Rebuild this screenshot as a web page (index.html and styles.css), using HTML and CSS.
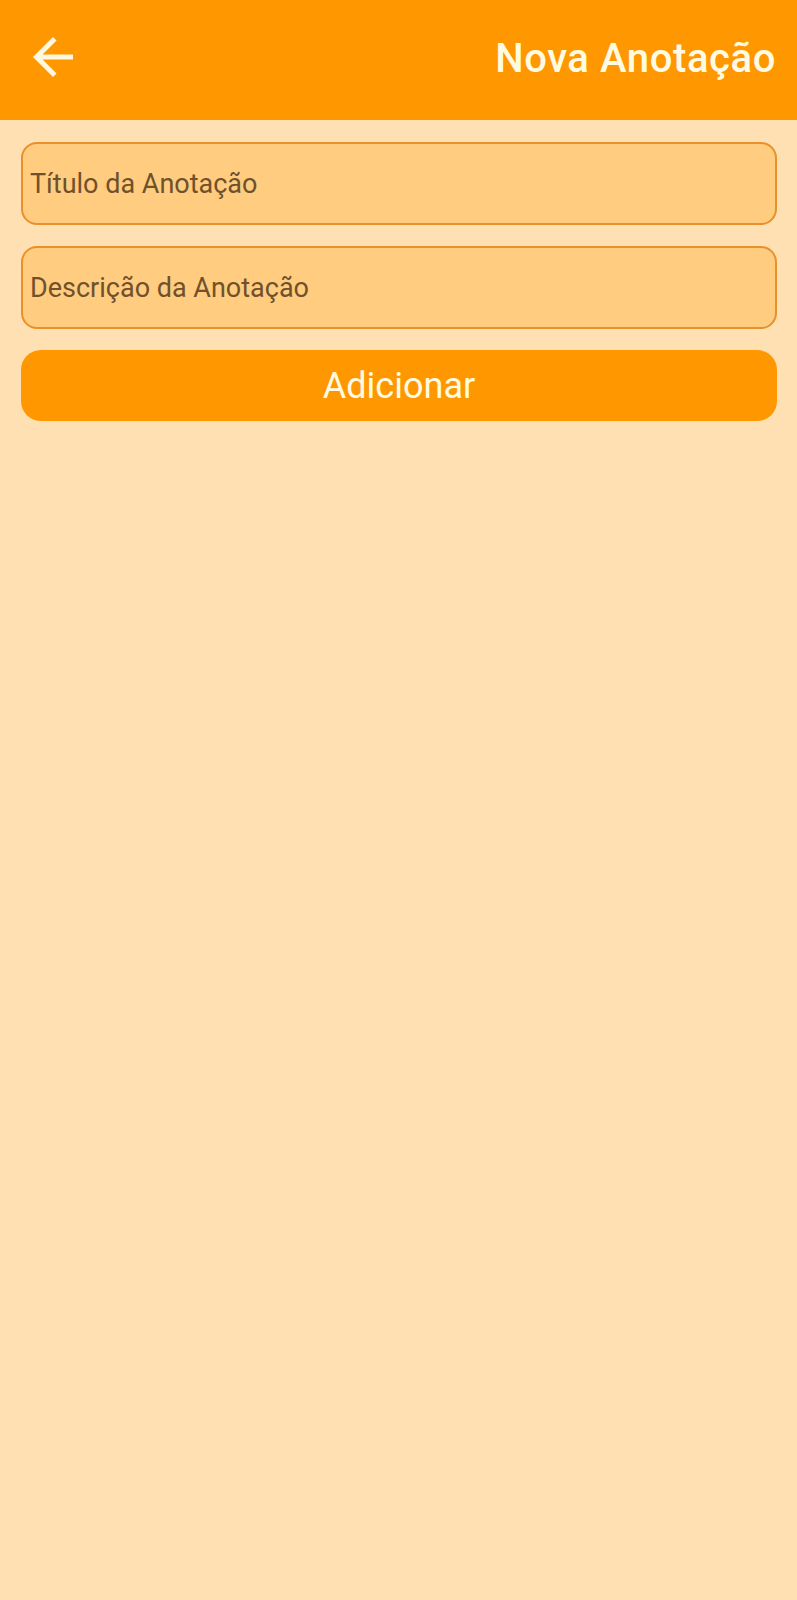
FILE: index.html
```html
<!DOCTYPE html>
<html lang="pt">
<head>
<meta charset="utf-8">
<title>Nova Anotação</title>
<link rel="stylesheet" href="styles.css">
</head>
<body>
<header class="appbar">
  <button class="back" aria-label="Voltar">
    <svg viewBox="0 0 24 24" width="60" height="60"><path d="M20 11H7.83l5.59-5.59L12 4l-8 8 8 8 1.41-1.41L7.83 13H20v-2z" fill="#fff8e1"/></svg>
  </button>
  <h1 class="title">Nova Anotação</h1>
</header>
<main class="content">
  <div class="field">Título da Anotação</div>
  <div class="field">Descrição da Anotação</div>
  <button class="add">Adicionar</button>
</main>
</body>
</html>
```
FILE: styles.css
```css
* { box-sizing: border-box; }
html, body { margin: 0; padding: 0; }
body {
  background: #ffe0b2;
  font-family: Roboto, "Noto Sans", sans-serif;
  min-height: 1600px;
}
.appbar {
  height: 120px;
  background: #ff9800;
  display: flex;
  align-items: center;
  justify-content: space-between;
  padding: 0 21px 0 23px;
}
.back {
  border: 0;
  background: none;
  padding: 0;
  width: 60px;
  height: 60px;
  display: flex;
  margin-top: -6px;
}
.title {
  margin: 0;
  color: #fffbe3;
  font-size: 40px;
  font-weight: 500;
  letter-spacing: 0.6px;
  margin-top: -3px;
}
.content {
  padding: 22px 20px 0 21px;
  display: flex;
  flex-direction: column;
  gap: 21px;
}
.field {
  height: 83px;
  background: #ffcc80;
  border: 2px solid #e8912a;
  border-radius: 16px;
  display: flex;
  align-items: center;
  padding-left: 7px;
  color: #70512b;
  font-size: 27px;
}
.add {
  height: 71px;
  background: #ff9800;
  border: 0;
  border-radius: 20px;
  color: #fffbe3;
  font-family: Roboto, "Noto Sans", sans-serif;
  font-size: 36px;
  margin-top: 0;
}
```
